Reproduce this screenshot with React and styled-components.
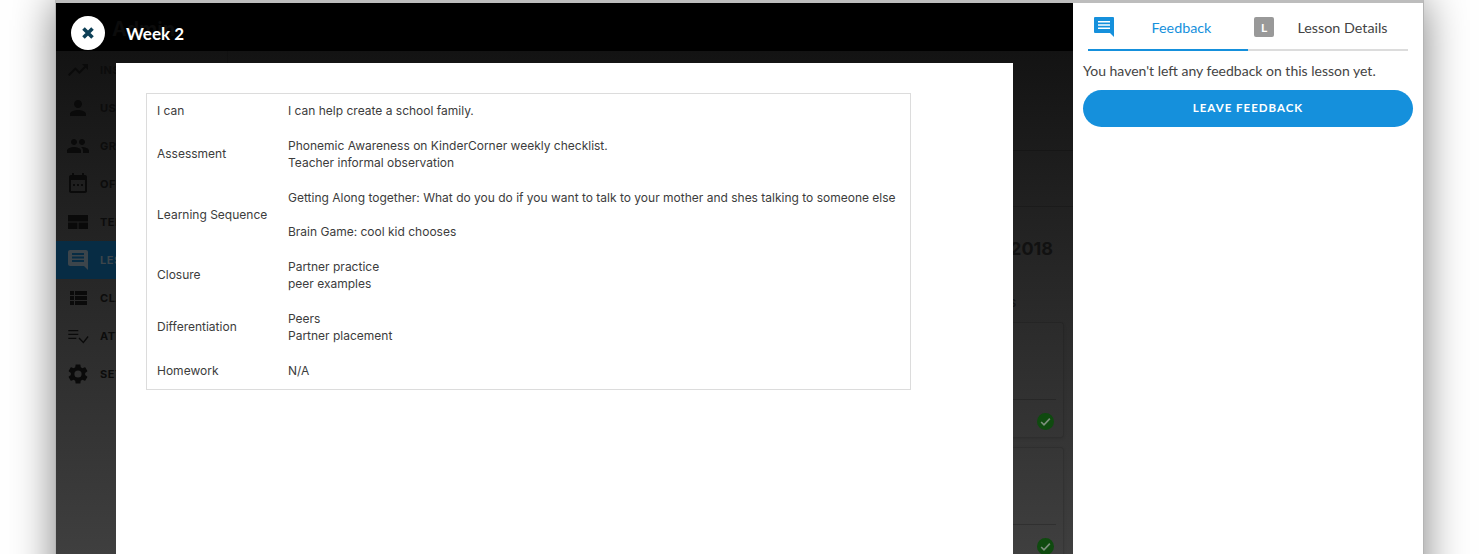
import React from "react";
import styled, { createGlobalStyle } from "styled-components";

const Global = createGlobalStyle`
  html, body { margin: 0; padding: 0; background: #fff; overflow: hidden; }
  body { font-family: "Inter", "Liberation Sans", sans-serif; }
  * { box-sizing: border-box; }
`;

const Page = styled.div`
  width: 1479px;
  height: 554px;
  overflow: hidden;
  padding: 0 55px;
  background: #fff;
`;

const AppWindow = styled.div`
  width: 1369px;
  height: 600px;
  display: flex;
  border: 1px solid #b4b4b4;
  border-top: 3px solid #bdbdbd;
  box-shadow: 0 0 40px rgba(0, 0, 0, 0.5);
`;

const Stage = styled.div`
  position: relative;
  width: 1017px;
  flex: none;
  background: linear-gradient(180deg, #131313 48px, #3f3f3f 551px);
`;

const Backdrop = styled.div`
  display: flex;
  height: 100%;
  padding-top: 48px;
`;

const Sidebar = styled.nav`
  width: 172px;
  flex: none;
  display: flex;
  flex-direction: column;
  border-right: 1px solid rgba(0, 0, 0, 0.15);
`;

const NavRow = styled.div`
  height: 38px;
  flex: none;
  display: flex;
  align-items: center;
  gap: 10px;
  padding-left: 10px;
  color: ${(p) => (p.$active ? "#3c454b" : "#0c0c0c")};
  background: ${(p) => (p.$active ? "#072c44" : "transparent")};
  font-size: 11px;
  font-weight: 700;
  letter-spacing: 0.5px;
  svg {
    width: 24px;
    height: 24px;
    flex: none;
    fill: ${(p) => (p.$active ? "#3c454b" : "#0a0a0a")};
  }
`;

const BackMain = styled.div`
  flex: 1;
  position: relative;
`;

const BackRule = styled.div`
  position: absolute;
  left: 0;
  right: 0;
  top: ${(p) => p.$top}px;
  height: 1px;
  background: rgba(0, 0, 0, 0.18);
`;

const BackYear = styled.div`
  position: absolute;
  right: 20px;
  top: 187px;
  font-size: 18px;
  font-weight: 700;
  color: #111;
`;

const BackSuffix = styled.div`
  position: absolute;
  left: 781px;
  top: 245px;
  font-size: 11px;
  font-weight: 600;
  color: #151515;
`;

const BackCard = styled.div`
  position: absolute;
  right: 9px;
  top: ${(p) => p.$top}px;
  width: 80px;
  height: 116px;
  border: 1px solid rgba(0, 0, 0, 0.12);
  border-radius: 3px;
  box-shadow: 0 1px 3px rgba(0, 0, 0, 0.1);
`;

const CardRule = styled.div`
  position: absolute;
  left: 0;
  right: 7px;
  bottom: 37px;
  height: 1px;
  background: rgba(0, 0, 0, 0.2);
`;

const CheckDot = styled.div`
  position: absolute;
  right: 9px;
  bottom: 7px;
  width: 17px;
  height: 17px;
  border-radius: 50%;
  background: #0f4a0f;
  display: flex;
  align-items: center;
  justify-content: center;
  svg { width: 13px; height: 13px; }
`;

const ModalHeader = styled.header`
  position: absolute;
  top: 0;
  left: 0;
  right: 0;
  height: 48px;
  background: #000;
  display: flex;
  align-items: center;
  gap: 21px;
  padding: 12px 0 0 15px;
`;

const GhostBrand = styled.div`
  position: absolute;
  left: 56px;
  top: 14px;
  font-size: 20px;
  font-weight: 700;
  color: #0b0b0b;
`;

const CloseButton = styled.button`
  position: relative;
  width: 34px;
  height: 34px;
  border: 0;
  padding: 0;
  border-radius: 50%;
  background: #fff;
  display: flex;
  align-items: center;
  justify-content: center;
  svg { width: 12px; height: 12px; }
`;

const HeaderTitle = styled.h1`
  position: relative;
  margin: 0;
  color: #fff;
  font-size: 17px;
  font-weight: 700;
  font-family: "Lato", sans-serif;
`;

const Sheet = styled.main`
  position: absolute;
  top: 60px;
  left: 60px;
  width: 897px;
  bottom: 0;
  background: #fff;
  padding: 30px;
`;

const LessonTable = styled.div`
  width: 765px;
  border: 1px solid #dcdcdc;
  padding: 8px 4px 10px 10px;
  display: grid;
  grid-template-columns: 131px 1fr;
  row-gap: 18px;
  align-items: center;
  color: #3c3c3c;
  font-size: 12px;
  line-height: 17px;
`;

const Label = styled.div`
  padding-bottom: ${(p) => (p.$lift ? 2 : 0)}px;
`;

const Value = styled.div``;

const Aside = styled.aside`
  flex: 1;
  background: #fff;
  padding: 11px 10px 0;
  display: flex;
  flex-direction: column;
`;

const Tabs = styled.div`
  display: flex;
  margin: 0 5px;
  height: 37px;
  border-bottom: 2px solid #dcdcdc;
`;

const Tab = styled.div`
  width: 160px;
  height: 37px;
  display: flex;
  align-items: flex-start;
  padding: 3px 0 0 6px;
  font-size: 14.3px;
  font-family: "Lato", sans-serif;
  color: ${(p) => (p.$active ? "#1590dc" : "#444")};
  border-bottom: 2px solid ${(p) => (p.$active ? "#1590dc" : "transparent")};
`;

const TabLabel = styled.span`
  flex: 1;
  text-align: center;
  line-height: 22px;
  padding-left: ${(p) => p.$pad}px;
`;

const LBadge = styled.span`
  width: 20px;
  height: 20px;
  border-radius: 2px;
  background: #999;
  color: #fff;
  font-size: 12px;
  font-weight: 700;
  display: flex;
  align-items: center;
  justify-content: center;
`;

const Note = styled.p`
  margin: 10px 0 0;
  font-size: 14px;
  line-height: 20px;
  color: #444;
  font-family: "Lato", sans-serif;
`;

const LeaveButton = styled.button`
  margin-top: 9px;
  height: 37px;
  width: 330px;
  border: 0;
  border-radius: 19px;
  padding: 0 0 2px;
  background: #1590dc;
  color: #fff;
  font-family: "Lato", sans-serif;
  font-size: 11.5px;
  font-weight: 700;
  letter-spacing: 1px;
`;

const Icon = ({ d }) => (
  <svg viewBox="0 0 24 24"><path d={d} /></svg>
);

const nav = [
  ["INSIGHTS", "M16 6l2.29 2.29-4.88 4.88-4-4L2 16.59 3.41 18l6-6 4 4 6.3-6.29L22 12V6z"],
  ["USERS", "M12 12c2.21 0 4-1.79 4-4s-1.79-4-4-4-4 1.79-4 4 1.79 4 4 4zm0 2c-2.67 0-8 1.34-8 4v2h16v-2c0-2.66-5.33-4-8-4z"],
  ["GROUPS", "M16 11c1.66 0 2.99-1.34 2.99-3S17.66 5 16 5s-3 1.34-3 3 1.34 3 3 3zm-8 0c1.66 0 2.99-1.34 2.99-3S9.66 5 8 5 5 6.34 5 8s1.34 3 3 3zm0 2c-2.33 0-7 1.17-7 3.5V19h14v-2.5C15 14.17 10.33 13 8 13zm8 0c-.29 0-.62.02-.97.05 1.16.84 1.97 1.97 1.97 3.45V19h6v-2.5c0-2.33-4.67-3.5-7-3.5z"],
  ["OFFICE", "M19 3h-1V1h-2v2H8V1H6v2H5c-1.1 0-2 .9-2 2v14c0 1.1.9 2 2 2h14c1.1 0 2-.9 2-2V5c0-1.1-.9-2-2-2zm0 16H5V8h14v11zM7 12h2v2H7zm4 0h2v2h-2zm4 0h2v2h-2z"],
  ["TEMPLATES", "M2 5h20v6.5H2zM2 12.5h9.5V19H2zM12.5 12.5H22V19h-9.5z"],
  ["LESSONS", "M20 2H4c-1.1 0-2 .9-2 2v12c0 1.1.9 2 2 2h14l4 4V4c0-1.1-.9-2-2-2zM18 14H6v-2h12zm0-3.5H6v-2h12zM18 7H6V5h12z", true],
  ["CLASSES", "M4 14h4v-4H4v4zm0 5h4v-4H4v4zM4 9h4V5H4v4zm5 5h12v-4H9v4zm0 5h12v-4H9v4zM9 5v4h12V5H9z"],
  ["ATTENDANCE", "M2.3 6h10v1.3h-10zM2.3 9.7h10V11h-10zM2.3 13.7h8V15h-8zM12.5 14.5l1-1 3.8 3.9 4.3-5.3 1 .9-5.2 6.4z"],
  ["SETTINGS", "M19.14 12.94c.04-.3.06-.61.06-.94s-.02-.64-.07-.94l2.03-1.58a.49.49 0 0 0 .12-.61l-1.92-3.32a.49.49 0 0 0-.59-.22l-2.39.96a7 7 0 0 0-1.62-.94l-.36-2.54a.48.48 0 0 0-.48-.41h-3.84c-.24 0-.43.17-.47.41l-.36 2.54c-.59.24-1.13.57-1.62.94l-2.39-.96c-.22-.08-.47 0-.59.22L2.74 8.87c-.12.21-.08.47.12.61l2.03 1.58c-.05.3-.09.63-.09.94s.02.64.07.94l-2.03 1.58a.49.49 0 0 0-.12.61l1.92 3.32c.12.22.37.29.59.22l2.39-.96c.5.38 1.03.7 1.62.94l.36 2.54c.05.24.24.41.48.41h3.84c.24 0 .44-.17.47-.41l.36-2.54c.59-.24 1.13-.56 1.62-.94l2.39.96c.22.08.47 0 .59-.22l1.92-3.32c.12-.22.07-.47-.12-.61l-2.01-1.58zM12 15.6A3.6 3.6 0 1 1 12 8.4a3.6 3.6 0 0 1 0 7.2z"],
];

const rows = [
  ["I can", ["I can help create a school family."]],
  ["Assessment", ["Phonemic Awareness on KinderCorner weekly checklist.", "Teacher informal observation"]],
  ["Learning Sequence", ["Getting Along together: What do you do if you want to talk to your mother and shes talking to someone else", "\u00a0", "Brain Game: cool kid chooses"]],
  ["Closure", ["Partner practice", "peer examples"]],
  ["Differentiation", ["Peers", "Partner placement"]],
  ["Homework", ["N/A"]],
];

const Check = () => (
  <svg viewBox="0 0 12 12" fill="none" stroke="#7d8f7d" strokeWidth="1.5"><path d="M2 6.5l2.6 2.6L10 3.4" /></svg>
);

export default function App() {
  return (
    <Page>
      <Global />
      <AppWindow>
        <Stage>
          <Backdrop>
            <Sidebar>
              {nav.map(([t, d, a]) => (
                <NavRow key={t} $active={a}><Icon d={d} />{t}</NavRow>
              ))}
            </Sidebar>
            <BackMain>
              <BackRule $top={99} />
              <BackRule $top={155} />
              <BackYear>2018</BackYear>
              <BackSuffix>S</BackSuffix>
              <BackCard $top={271}><CardRule /><CheckDot><Check /></CheckDot></BackCard>
              <BackCard $top={396}><CardRule /><CheckDot><Check /></CheckDot></BackCard>
            </BackMain>
          </Backdrop>
          <ModalHeader>
            <GhostBrand>Admin</GhostBrand>
            <CloseButton aria-label="Close">
              <svg viewBox="0 0 12 12" fill="none" stroke="#0d3f56" strokeWidth="3.6"><path d="M1.5 1.5l9 9M10.5 1.5l-9 9" /></svg>
            </CloseButton>
            <HeaderTitle>Week 2</HeaderTitle>
          </ModalHeader>
          <Sheet>
            <LessonTable>
              {rows.map(([l, v]) => (
                <React.Fragment key={l}>
                  <Label $lift={v.length === 2}>{l}</Label>
                  <Value>{v.map((line, i) => <div key={i}>{line}</div>)}</Value>
                </React.Fragment>
              ))}
            </LessonTable>
          </Sheet>
        </Stage>
        <Aside>
          <Tabs>
            <Tab $active>
              <svg width="20" height="20" viewBox="0 0 20 20" fill="#1590dc"><path d="M1 0h18a1 1 0 0 1 1 1v19l-4-4H1a1 1 0 0 1-1-1V1a1 1 0 0 1 1-1z" /><path d="M4 4h12v1.6H4zM4 7.2h12v1.6H4zM4 10.4h12v1.6H4z" fill="#fff" /></svg>
              <TabLabel $pad={1}>Feedback</TabLabel>
            </Tab>
            <Tab>
              <LBadge>L</LBadge>
              <TabLabel $pad={3}>Lesson Details</TabLabel>
            </Tab>
          </Tabs>
          <Note>You haven't left any feedback on this lesson yet.</Note>
          <LeaveButton>LEAVE FEEDBACK</LeaveButton>
        </Aside>
      </AppWindow>
    </Page>
  );
}
